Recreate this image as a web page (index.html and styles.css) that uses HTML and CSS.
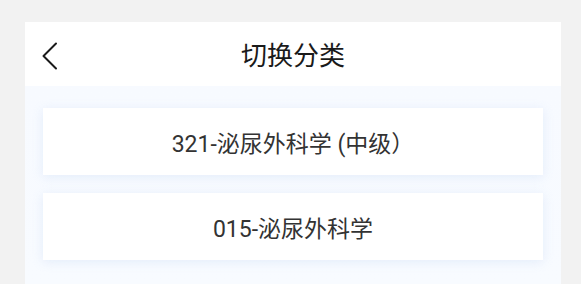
FILE: index.html
```html
<!DOCTYPE html>
<html lang="zh-CN">
<head>
<meta charset="utf-8">
<link rel="stylesheet" href="styles.css">
</head>
<body>
<div class="panel">
  <div class="header">
    <span class="back">
      <svg width="17" height="28" viewBox="0 0 17 28"><path d="M15 1.5 L2.5 14 L15 26.5" fill="none" stroke="#1a1a1a" stroke-width="2" stroke-linecap="round" stroke-linejoin="round"/></svg>
    </span>
    <div class="title">切换分类</div>
  </div>
  <div class="content">
    <div class="card">321-泌尿外科学 (中级）</div>
    <div class="card">015-泌尿外科学</div>
  </div>
</div>
</body>
</html>
```
FILE: styles.css
```css
html, body { margin: 0; padding: 0; }
body {
  background: #f2f2f2;
  width: 581px;
  height: 284px;
  overflow: hidden;
  font-family: "Roboto", "Noto Sans CJK SC", sans-serif;
}
.panel {
  margin: 22px 0 0 25px;
  width: 536px;
  height: 262px;
  background: #ffffff;
  display: flex;
  flex-direction: column;
}
.header {
  position: relative;
  height: 64px;
  display: flex;
  align-items: center;
  justify-content: center;
}
.back {
  position: absolute;
  left: 16px;
  top: 20px;
  display: flex;
}
.title {
  font-family: "Noto Sans CJK SC", sans-serif;
  font-size: 26px;
  line-height: 30px;
  color: #1a1a1a;
}
.content {
  flex: 1;
  background: linear-gradient(#f7faff, #f8fbff);
  padding: 22px 18px 0 18px;
  display: flex;
  flex-direction: column;
  gap: 18px;
}
.card {
  height: 67px;
  background: #ffffff;
  display: flex;
  align-items: center;
  justify-content: center;
  font-size: 23px;
  color: #333333;
  box-shadow: 0 2px 10px rgba(205, 220, 245, 0.45);
}
```
